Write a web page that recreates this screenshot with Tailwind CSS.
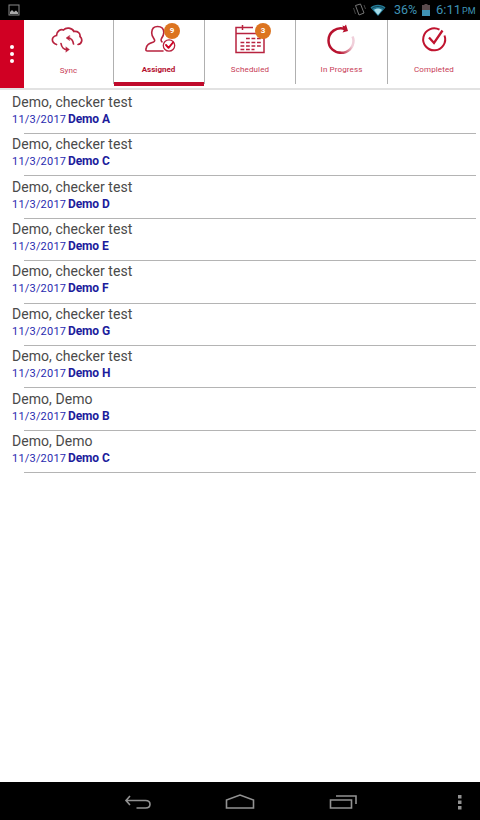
<!DOCTYPE html>
<html lang="en">
<head>
  <meta charset="UTF-8" />
  <meta name="viewport" content="width=device-width, initial-scale=1.0"/>
  <title>Assigned</title>
  <script src="https://cdn.jsdelivr.net/npm/@tailwindcss/browser@4"></script>
</head>
<body class="bg-white font-[Roboto,sans-serif] w-[480px] h-[820px] flex flex-col overflow-hidden">

  <!-- Status Bar -->
  <div class="h-5 shrink-0 bg-black flex items-center justify-between pl-2 pr-[3px] text-[#3f93b5]">
    <svg class="w-3 h-3" viewBox="0 0 12 12" fill="none">
      <rect x="1" y="1" width="10" height="10" stroke="#8a8a8a"/>
      <path d="M2 10V8l2-2 2 2 2-1.500 2 2V10z" fill="#aaa"/>
    </svg>
    <div class="flex items-center">
      <svg class="w-3.5 h-4 mr-1" viewBox="0 0 14 16" fill="none" stroke="#777">
        <path d="M3.500 3.500l5-1.500 3.500 9-5 2z"/>
        <path d="M1.500 6l2 6M12 3l1.500 4" stroke="#444"/>
      </svg>
      <svg class="w-4 h-3.5 mr-2" viewBox="0 0 16 14">
        <path d="M0.500 4.500C4.500 0.800 11.500 0.800 15.500 4.500L8 13z" fill="#237a96"/>
        <path d="M4 7C6 5 10 5 12 7L8 12z" fill="#a5dcea"/>
        <path d="M2 5.500C5.500 2.800 10.500 2.800 14 5.500" stroke="#0b2c38" stroke-width=".7" fill="none"/>
      </svg>
      <span class="text-[12.500px] leading-5 w-7">36%</span>
      <svg class="w-2 h-3 mr-1.5" viewBox="0 0 8 12">
        <path d="M2.500 0h3v1H8v5H0V1h2.500z" fill="#5a4a4c"/>
        <path d="M0 6h8v6H0z" fill="#3f93b5"/>
      </svg>
      <span class="text-[13px] leading-5 w-[26px] whitespace-nowrap">6:11</span>
      <span class="text-[9px] leading-5 pt-0.5 w-[15px]">PM</span>
    </div>
  </div>

  <!-- Tabs -->
  <div class="h-[70px] shrink-0 flex border-b-2 border-[#e2e2e2] text-[#c73a55] text-[8px] leading-[10px] tracking-[.12px] text-center">
    <div class="w-6 bg-[#d00023] flex flex-col items-center justify-center gap-[2.500px]">
      <i class="w-[4.500px] h-[4.500px] rounded-full bg-white"></i>
      <i class="w-[4.500px] h-[4.500px] rounded-full bg-white"></i>
      <i class="w-[4.500px] h-[4.500px] rounded-full bg-white"></i>
    </div>

    <div class="w-[90px] h-16 border-r border-[#b0b0b0] flex flex-col items-center">
      <svg class="w-8 h-[34px] mt-1 -ml-1" viewBox="0 0 32 34" fill="none" stroke="#b8233f" stroke-width="1.700" stroke-linecap="round">
        <path d="M5.500 20.500C0 18.500 0 13 5.500 11.500C5.500 7 9.500 5 12.500 6C15 3 21 3.500 23 7.500C27 7 29.500 9.500 29 12.500C32 15 31 20 27 20.500"/>
        <path d="M17 14C20.500 14 22 16.500 22.500 20M10 19.500C10.500 23 13 25.500 16 25.500"/>
        <path d="M18.500 11.500l-3.500 2.500 3.500 2.500zM15 23l3.500 2.500-3.500 2.500z" fill="#b8233f" stroke-width=".4"/>
      </svg>
      <span class="mt-2">Sync</span>
    </div>

    <div class="w-[91px] h-[67px] relative flex flex-col items-center">
      <svg class="w-8 h-8 mt-[3px] ml-0.5" viewBox="0 0 32 32" fill="none" stroke="#b8233f" stroke-width="1.600" stroke-linecap="round" stroke-linejoin="round">
        <path d="M18 28H2.500Q0.500 28 1 26C1.500 21.500 4 20.500 8.500 19C10.500 18 9.500 16.500 8.500 15C7 13 6.500 11 6.800 9C7 5.500 9.500 3.500 12.500 3.500C16.500 3.500 18.800 6 18.800 9.500C18.800 12 17.500 14 16.500 15.500C16 16.500 16 18 17 18.800"/>
        <circle cx="24" cy="22.500" r="5.700" stroke-width="1.300"/>
        <path d="M21 22l2.500 2.800 4.500-5.300" stroke="#d00023" stroke-width="1.900"/>
      </svg>
      <b class="mt-2.5 -ml-0.5 text-[#b5102f] tracking-[.02px]">Assigned</b>
      <span class="absolute left-[50px] top-[3px] w-4 h-4 rounded-full bg-[#dc7420] text-white text-[8px] leading-4 font-bold tracking-normal">9</span>
      <div class="absolute bottom-px left-0 w-[90px] h-1 bg-[#c00a2b]"></div>
      <div class="absolute top-0 right-0 w-px h-16 bg-[#b0b0b0]"></div>
    </div>

    <div class="w-[91px] h-16 border-r border-[#b0b0b0] relative flex flex-col items-center">
      <svg class="w-8 h-8 mt-[3px]" viewBox="0 0 32 32" fill="none" stroke="#b8233f" stroke-width="1.500">
        <path d="M19 4.500H2V29.500h28V13M2 10.500h20M8.500 2v5"/>
        <path d="M12 15.500h15M6.500 19.500h20.500M6.500 23h20.500M6.500 26.500h14" stroke-width="1.500" stroke-dasharray="3.800 1.700"/>
      </svg>
      <span class="mt-2.5">Scheduled</span>
      <span class="absolute left-[50px] top-[3px] w-4 h-4 rounded-full bg-[#dc7420] text-white text-[8px] leading-4 font-bold tracking-normal">3</span>
    </div>

    <div class="w-[92px] h-16 border-r border-[#b0b0b0] flex flex-col items-center">
      <svg class="w-8 h-8 mt-[3px] -ml-0.5" viewBox="0 0 32 32" fill="none" stroke-width="2.500">
        <defs>
          <linearGradient id="fade" gradientUnits="userSpaceOnUse" x1="13" y1="28" x2="25" y2="20">
            <stop offset="0" stop-color="#b8132f"/>
            <stop offset="1" stop-color="#f0cfda"/>
          </linearGradient>
        </defs>
        <path d="M20 6C11.500 3 3.500 9.500 3.500 17.500C3.500 25 9.500 29.800 15.500 29.800" stroke="#b8132f"/>
        <path d="M14.500 29.800C23 30.500 28.500 24.500 28.500 17.500C28.500 16 28 14.500 27.500 13.500" stroke="url(#fade)"/>
        <path d="M17.500 2.500l2 .8L21 1.500l2 6.500-5.500 1.500 1.200-2z" fill="#b8132f"/>
      </svg>
      <span class="mt-2.5">In Progress</span>
    </div>

    <div class="w-[92px] h-16 flex flex-col items-center">
      <svg class="w-8 h-8 mt-[3px]" viewBox="0 0 32 32" fill="none" stroke="#c0142f" stroke-width="2">
        <path d="M21.500 6.700A11 11 0 1 0 26.500 12.500"/>
        <path d="M11 14.500l5 5.500L24.500 7.500" stroke-width="2.300"/>
      </svg>
      <span class="mt-2.5">Completed</span>
    </div>
  </div>

  <!-- Job List -->
  <div id="jobs" class="grow pt-[1.600px]"></div>

  <!-- Navigation Bar -->
  <div class="h-[38px] shrink-0 bg-black">
    <svg class="w-[480px] h-[38px]" viewBox="0 0 480 38" fill="none" stroke="#929292" stroke-width="1.600">
      <path d="M130 14l-4 4.500 4 4.500M126 18.500h19.500C151.500 18.500 151.500 26 145.500 26H136.500"/>
      <path d="M226.500 26V18l13.500-5 13.500 5V26z"/>
      <path d="M330.500 18h21v8h-21zM336 14h20v8"/>
      <g fill="#929292" stroke="none">
        <rect x="458" y="13" width="3.500" height="3.500"/>
        <rect x="458" y="18.500" width="3.500" height="3.500"/>
        <rect x="458" y="24" width="3.500" height="3.500"/>
      </g>
    </svg>
  </div>

  <script>
    const jobs = [
      ["Demo, checker test", "Demo A"],
      ["Demo, checker test", "Demo C"],
      ["Demo, checker test", "Demo D"],
      ["Demo, checker test", "Demo E"],
      ["Demo, checker test", "Demo F"],
      ["Demo, checker test", "Demo G"],
      ["Demo, checker test", "Demo H"],
      ["Demo, Demo", "Demo B"],
      ["Demo, Demo", "Demo C"]
    ];

    document.getElementById("jobs").innerHTML = jobs.map(([name, site]) => `
      <div class="h-[42.400px] flex flex-col">
        <p class="pl-3 pt-[1.200px] text-[14px] leading-[18px] tracking-[.06px] text-[#4a4a4a]">${name}</p>
        <p class="pl-3 flex text-[#2a2ab0] leading-[17px]">
          <span class="w-14 text-[11px] tracking-[.2px]">11/3/2017</span>
          <b class="text-[12px] tracking-[-.1px] text-[#1c1c9c]">${site}</b>
        </p>
        <div class="mt-auto ml-6 mr-1 h-px bg-[#b4b4b4]"></div>
      </div>
    `).join("");
  </script>
</body>
</html>
